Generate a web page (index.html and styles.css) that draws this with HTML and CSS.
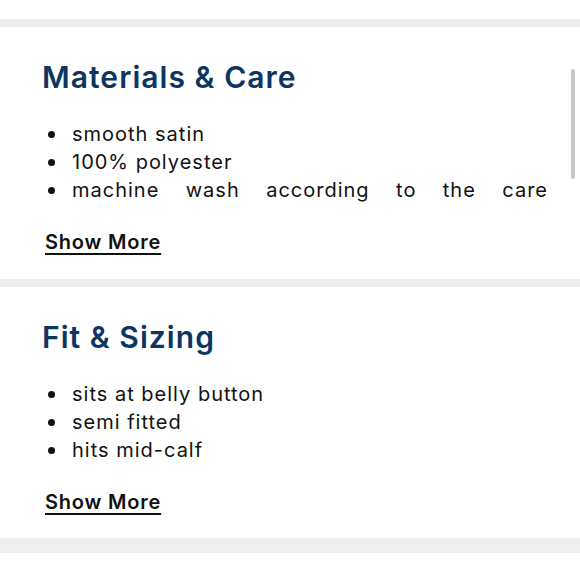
FILE: index.html
```html
<!DOCTYPE html>
<html lang="en">
<head>
<meta charset="utf-8">
<title>Product details</title>
<link rel="stylesheet" href="styles.css">
</head>
<body>
  <div class="top-gap"></div>
  <div class="divider"></div>
  <section class="panel">
    <h2 class="panel-title">Materials &amp; Care</h2>
    <ul class="bullets">
      <li>smooth satin</li>
      <li>100% polyester</li>
      <li class="justified">machine wash according to the care</li>
    </ul>
    <a class="show-more" href="#">Show More</a>
    <div class="scrollbar"></div>
  </section>
  <div class="divider"></div>
  <section class="panel panel-second">
    <h2 class="panel-title">Fit &amp; Sizing</h2>
    <ul class="bullets">
      <li>sits at belly button</li>
      <li>semi fitted</li>
      <li>hits mid-calf</li>
    </ul>
    <a class="show-more" href="#">Show More</a>
  </section>
  <div class="divider divider-thick"></div>
</body>
</html>
```
FILE: styles.css
```css
html, body {
  margin: 0;
  padding: 0;
  background: #ffffff;
}

body {
  font-family: Inter, "Noto Sans", sans-serif;
  color: #111111;
}

.top-gap {
  height: 19px;
}

.divider {
  height: 8px;
  background: #eeeeee;
}

.divider-thick {
  height: 15px;
}

.panel {
  position: relative;
  height: 252px;
  box-sizing: border-box;
  padding: 32px 32px 0 42px;
  display: flex;
  flex-direction: column;
  align-items: flex-start;
}

.panel-second {
  height: 251px;
}

.panel-title {
  margin: 0;
  font-size: 30px;
  line-height: 36px;
  font-weight: 560;
  color: #0c3661;
  letter-spacing: 1.05px;
}

.bullets {
  list-style: none;
  margin: 25px 0 0 0;
  padding: 0;
  align-self: stretch;
  font-size: 20px;
  line-height: 28px;
  letter-spacing: 1px;
  height: 84px;
}

.bullets li {
  display: grid;
  grid-template-columns: 30px 1fr;
}

.bullets li.justified {
  text-align: justify;
  text-align-last: justify;
}

.bullets li::before {
  content: "";
  width: 7px;
  height: 7px;
  border-radius: 50%;
  background: #111111;
  margin: 11px 0 0 6px;
}

.show-more {
  margin-top: 24px;
  margin-left: 3px;
  font-size: 20px;
  line-height: 28px;
  font-weight: 600;
  color: #111111;
  letter-spacing: 0.8px;
  text-decoration: underline;
  text-decoration-thickness: 2px;
  text-underline-offset: 4px;
}

.scrollbar {
  position: absolute;
  top: 42px;
  right: 5px;
  width: 4px;
  height: 110px;
  border-radius: 2px;
  background: #c8c8c8;
}
```
